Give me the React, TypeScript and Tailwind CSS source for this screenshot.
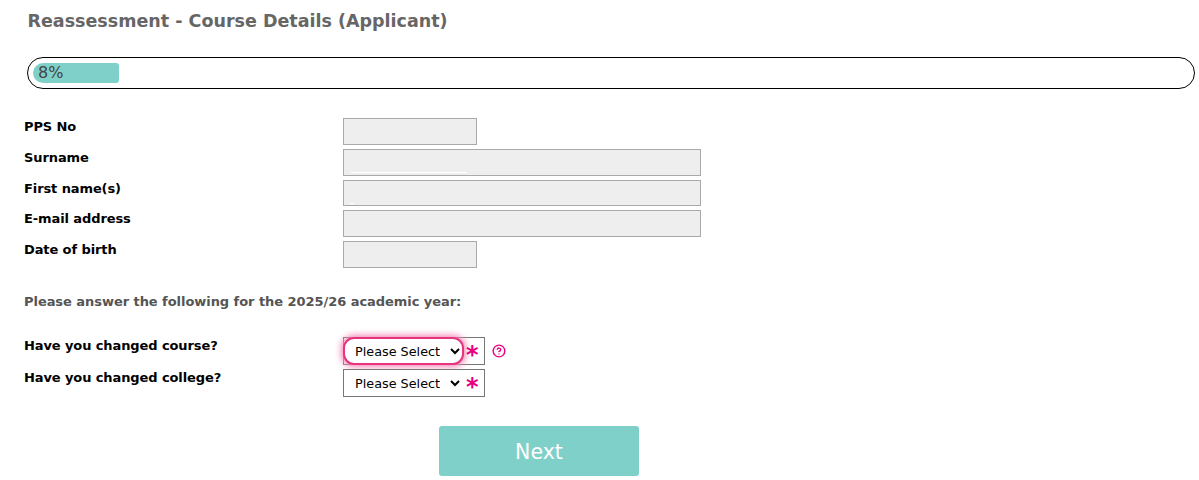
import React from 'react'
import { CircleHelp } from 'lucide-react'

const font = "[font-family:'DejaVu_Sans',Verdana,sans-serif]"
const labelClass = 'w-[319px] text-[13px] leading-[18px] font-bold text-black tracking-[-0.1px]'

const details = [
  { label: 'PPS No', width: 'w-[134px]', mark: '' },
  { label: 'Surname', width: 'w-[358px]', mark: 'w-[116px] ml-[7px]' },
  { label: 'First name(s)', width: 'w-[358px]', mark: 'w-[4px] ml-[6px]' },
  { label: 'E-mail address', width: 'w-[358px]', mark: '' },
  { label: 'Date of birth', width: 'w-[134px]', mark: '' },
]

const App: React.FC = () => {
  return (
    <div className={`${font} w-[1199px] h-[480px] overflow-hidden bg-white relative`}>
      <h1 className="ml-[27.5px] pt-[10px] text-[17.5px] leading-[22px] font-bold text-[#666666]">
        Reassessment - Course Details (Applicant)
      </h1>

      {/* Progress */}
      <div className="mt-[25px] ml-[27px] w-[1168px] h-[32px] border border-black rounded-[16px] p-[5px]">
        <div className="w-[86px] h-[20px] bg-[#7fd0c9] rounded-l-[10px] rounded-r-[3px] pl-[5px] text-[16px] leading-[20px] text-[#444444]">
          8%
        </div>
      </div>

      {/* Read only details */}
      <div className="mt-[29px] ml-[24px] flex flex-col gap-1">
        {details.map((row) => (
          <div key={row.label} className="flex h-[26.75px]">
            <label className={labelClass}>{row.label}</label>
            <div className={`${row.width} h-full border border-[#aaaaaa] bg-[#eeeeee] flex flex-col justify-end pb-[1.5px]`}>
              {row.mark && <div className={`${row.mark} h-px bg-white`} />}
            </div>
          </div>
        ))}
      </div>

      <p className="mt-[25px] ml-[24px] text-[13px] leading-[18px] font-bold text-[#555555] tracking-[-0.05px]">
        Please answer the following for the 2025/26 academic year:
      </p>

      <div className="mt-[26px] ml-[24px] flex flex-col gap-1">
        <div className="flex h-[28px]">
          <label className={labelClass}>Have you changed course?</label>
          <div className="w-[142px] h-full border border-[#777777] flex items-center">
            <select className="w-[119px] h-[26px] pl-[7px] pt-[2px] appearance-auto bg-white text-[12.8px] text-black rounded-[10px] outline outline-2 -outline-offset-1 outline-[#e8337f] shadow-[0_0_6px_3px_#f58ab8]">
              <option>Please Select</option>
            </select>
            <span className="ml-[3px] text-[24px] leading-[26px] h-[26px] font-bold text-[#e6007e] pt-[4px]">*</span>
          </div>
          <CircleHelp className="ml-[7px] mt-[7px] w-[14px] h-[14px] text-[#e6007e]" strokeWidth={2.4} />
        </div>
        <div className="flex h-[28px]">
          <label className={labelClass}>Have you changed college?</label>
          <div className="w-[142px] h-full border border-[#777777] flex items-center">
            <select className="w-[119px] h-[26px] pl-[7px] pt-[2px] appearance-auto bg-white text-[12.8px] text-black outline-none">
              <option>Please Select</option>
            </select>
            <span className="ml-[3px] text-[24px] leading-[26px] h-[26px] font-bold text-[#e6007e] pt-[4px]">*</span>
          </div>
        </div>
      </div>

      <button className="block mt-[29px] ml-[439px] w-[200px] h-[50px] pt-[4px] rounded-[3px] bg-[#7fd0c9] text-white text-[20.5px]">
        Next
      </button>
    </div>
  )
}

export default App
